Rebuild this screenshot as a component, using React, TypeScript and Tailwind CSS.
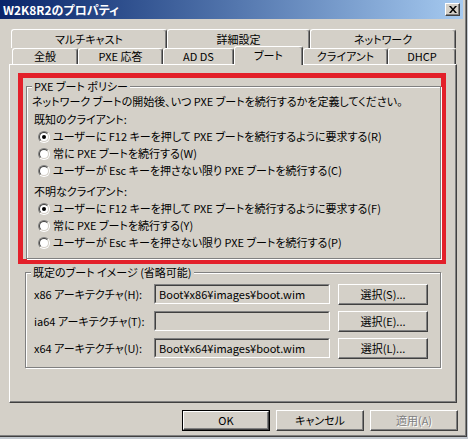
import type { ReactNode } from 'react';

const FONT = "font-['Noto_Sans_CJK_JP','Noto_Sans_CJK_SC',sans-serif] [font-feature-settings:'palt']";

function Radio({ checked, label }: { checked?: boolean; label: string }) {
  return (
    <div className="flex h-[17px] items-center pl-[11px]">
      <span className="flex h-[12px] w-[12px] items-center justify-center rounded-full border border-t-[#808080] border-l-[#808080] border-r-white border-b-white">
        <span className="flex h-[10px] w-[10px] items-center justify-center rounded-full border border-t-[#404040] border-l-[#404040] border-r-[#d4d0c8] border-b-[#d4d0c8] bg-white">
          {checked && <span className="h-[4px] w-[4px] rounded-full bg-black" />}
        </span>
      </span>
      <span className="ml-[3px] whitespace-nowrap">{label}</span>
    </div>
  );
}

function Field({ value }: { value?: string }) {
  return (
    <div className="h-[20px] w-[176px] border border-t-[#808080] border-l-[#808080] border-r-white border-b-white">
      <div className="flex h-full w-full items-center whitespace-nowrap border border-t-[#404040] border-l-[#404040] border-r-[#d4d0c8] border-b-[#d4d0c8] pl-[3px]">
        {value}
      </div>
    </div>
  );
}

function Button({ children, width = 'w-[90px]' }: { children: ReactNode; width?: string }) {
  return (
    <div
      className={`flex h-[21px] ${width} items-center justify-center border border-t-white border-l-white border-r-[#404040] border-b-[#404040] shadow-[inset_-1px_-1px_0_#808080]`}
    >
      {children}
    </div>
  );
}

function Tab({ label, width, selected }: { label: string; width: string; selected?: boolean }) {
  if (selected) {
    return (
      <div
        className={`relative z-10 -mt-[2px] flex h-[19px] ${width} items-center justify-center rounded-t-[3px] border-t border-l border-r border-t-white border-l-white border-r-[#404040] bg-[#d4d0c8] pb-[2px] shadow-[inset_-1px_0_0_#808080]`}
      >
        {label}
      </div>
    );
  }
  return (
    <div
      className={`flex h-full ${width} items-center justify-center rounded-t-[3px] border-t border-l border-r border-t-white border-l-white border-r-[#404040] bg-[#d4d0c8] shadow-[inset_-1px_0_0_#808080]`}
    >
      {label}
    </div>
  );
}

export default function App() {
  return (
    <div className={`h-[439px] w-[468px] overflow-hidden bg-[#c3c9d0] text-[11px] leading-none text-black ${FONT}`}>
      <div className="h-[437px] w-[467px] border-r border-b border-r-[#404040] border-b-[#404040] bg-[#d4d0c8] shadow-[inset_-1px_-1px_0_#808080]">
        {/* Title bar */}
        <div className="mr-[3px] flex h-[19px] items-center justify-between bg-gradient-to-r from-[#0a246a] to-[#a6caf0] pl-[3px] pr-[3px]">
          <span className="text-[12px] font-bold text-white">W2K8R2のプロパティ</span>
          <div className="flex h-[13px] w-[15px] items-center justify-center border border-t-white border-l-white border-r-[#404040] border-b-[#404040] bg-[#d4d0c8] shadow-[inset_-1px_-1px_0_#808080]">
            <svg width="8" height="7" viewBox="0 0 8 7">
              <path d="M0 0h2l2 2.5L6 0h2L5 3.5 8 7H6L4 4.5 2 7H0l3-3.5z" fill="#000" />
            </svg>
          </div>
        </div>

        {/* Tabs */}
        <div className="pt-[10px]">
          <div className="ml-[11px] flex h-[19px]">
            <Tab label="マルチキャスト" width="w-[156px]" />
            <Tab label="詳細設定" width="w-[143px]" />
            <Tab label="ネットワーク" width="w-[146px]" />
          </div>
          <div className="ml-[12px] flex h-[16px] items-start">
            <Tab label="全般" width="w-[66px]" />
            <Tab label="PXE 応答" width="w-[85px]" />
            <Tab label="AD DS" width="w-[71px]" />
            <Tab label="ブート" width="w-[69px]" selected />
            <Tab label="クライアント" width="w-[85px]" />
            <Tab label="DHCP" width="w-[68px]" />
          </div>

          {/* Panel */}
          <div className="ml-[9px] h-[339px] w-[448px] border border-t-white border-l-white border-r-[#404040] border-b-[#404040] shadow-[inset_-1px_-1px_0_#808080]">
            <div className="ml-[8px] mt-[8px] h-[191px] w-[428px] border-[5px] border-[#e3202a] pl-[3px] pt-[2px]">
              <fieldset className="h-[179px] w-[415px] border border-[#808080] shadow-[1px_1px_0_#fff,inset_1px_1px_0_#fff]">
                <legend className="ml-[5px] bg-[#d4d0c8] px-[2px] leading-[12px]">PXE ブート ポリシー</legend>
                <div className="mt-[1px] flex h-[16px] items-center whitespace-nowrap pl-[5px]">
                  ネットワーク ブートの開始後、いつ PXE ブートを続行するかを定義してください。
                </div>
                <div className="mt-[2px] flex h-[17px] items-center pl-[7px]">既知のクライアント:</div>
                <Radio checked label="ユーザーに F12 キーを押して PXE ブートを続行するように要求する(R)" />
                <Radio label="常に PXE ブートを続行する(W)" />
                <Radio label="ユーザーが Esc キーを押さない限り PXE ブートを続行する(C)" />
                <div className="mt-[4px] flex h-[17px] items-center pl-[7px]">不明なクライアント:</div>
                <Radio checked label="ユーザーに F12 キーを押して PXE ブートを続行するように要求する(F)" />
                <Radio label="常に PXE ブートを続行する(Y)" />
                <Radio label="ユーザーが Esc キーを押さない限り PXE ブートを続行する(P)" />
              </fieldset>
            </div>

            <fieldset className="ml-[15px] mt-[2px] h-[102px] w-[416px] border border-[#808080] shadow-[1px_1px_0_#fff,inset_1px_1px_0_#fff]">
              <legend className="ml-[5px] bg-[#d4d0c8] px-[2px] leading-[12px]">既定のブート イメージ (省略可能)</legend>
              <div className="mt-[5px] flex flex-col gap-[5px] pl-[8px]">
                <div className="flex h-[22px] items-center">
                  <span className="w-[120px] whitespace-nowrap">x86 アーキテクチャ(H):</span>
                  <Field value="Boot¥x86¥images¥boot.wim" />
                  <span className="ml-[8px]">
                    <Button>選択(S)...</Button>
                  </span>
                </div>
                <div className="flex h-[22px] items-center">
                  <span className="w-[120px] whitespace-nowrap">ia64 アーキテクチャ(T):</span>
                  <Field />
                  <span className="ml-[8px]">
                    <Button>選択(E)...</Button>
                  </span>
                </div>
                <div className="flex h-[22px] items-center">
                  <span className="w-[120px] whitespace-nowrap">x64 アーキテクチャ(U):</span>
                  <Field value="Boot¥x64¥images¥boot.wim" />
                  <span className="ml-[8px]">
                    <Button>選択(L)...</Button>
                  </span>
                </div>
              </div>
            </fieldset>
          </div>

          {/* Dialog buttons */}
          <div className="mt-[7px] flex justify-end gap-[6px] pr-[8px]">
            <div className="h-[21px] w-[88px] border border-black">
              <div className="flex h-full w-full items-center justify-center border border-t-white border-l-white border-r-[#404040] border-b-[#404040] shadow-[inset_-1px_-1px_0_#808080]">
                OK
              </div>
            </div>
            <Button width="w-[88px]">キャンセル</Button>
            <Button width="w-[88px]">
              <span className="text-[#808080] [text-shadow:1px_1px_0_#fff]">適用(A)</span>
            </Button>
          </div>
        </div>
      </div>
    </div>
  );
}
